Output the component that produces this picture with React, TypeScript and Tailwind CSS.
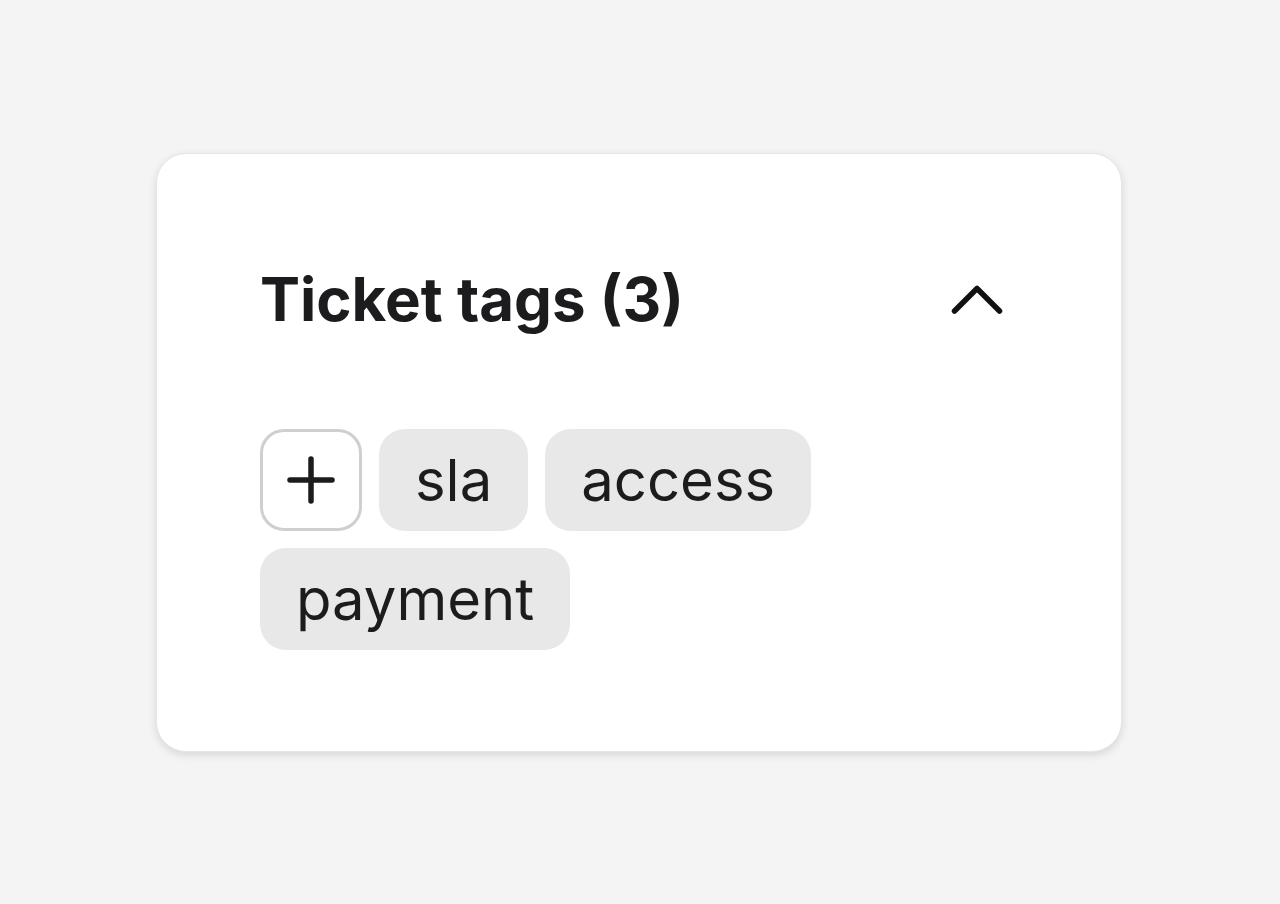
import React from "react";

export default function App() {
  const tags = ["sla", "access", "payment"];
  return (
    <div className="w-[1280px] h-[904px] bg-[#f4f4f4] flex items-start justify-start" style={{ fontFamily: "Inter, 'Noto Sans', sans-serif" }}>
      <div className="ml-[156px] mt-[153px] w-[966px] h-[599px] bg-white rounded-[30px] border border-[#e6e6e6] shadow-[0_3px_8px_rgba(0,0,0,0.12)] px-[103px] pt-[103px] flex flex-col">
        <div className="flex items-center justify-between h-[82px] shrink-0 mt-[1px]">
          <h2 className="text-[60px] leading-none font-bold text-[#1c1c1e]">Ticket tags (3)</h2>
          <svg width="56" height="36" viewBox="0 0 56 36" className="mr-[13px]">
            <path d="M5.5 30 L28 7.5 L50.5 30" fill="none" stroke="#111" strokeWidth="5.5" strokeLinecap="round" strokeLinejoin="round" />
          </svg>
        </div>
        <div className="mt-[89px] flex flex-wrap gap-[17px] w-full">
          <button className="w-[102px] h-[102px] rounded-[24px] border-[3px] border-[#cfcfcf] bg-white flex items-center justify-center">
            <svg width="50" height="50" viewBox="0 0 50 50">
              <path d="M4 25 H46 M25 4 V46" fill="none" stroke="#1c1c1e" strokeWidth="5.5" strokeLinecap="round" />
            </svg>
          </button>
          {tags.map((t) => (
            <span key={t} className="h-[102px] px-[36px] rounded-[26px] bg-[#e8e8e8] flex items-center text-[58px] leading-none text-[#1c1c1e]">
              {t}
            </span>
          ))}
        </div>
      </div>
    </div>
  );
}
